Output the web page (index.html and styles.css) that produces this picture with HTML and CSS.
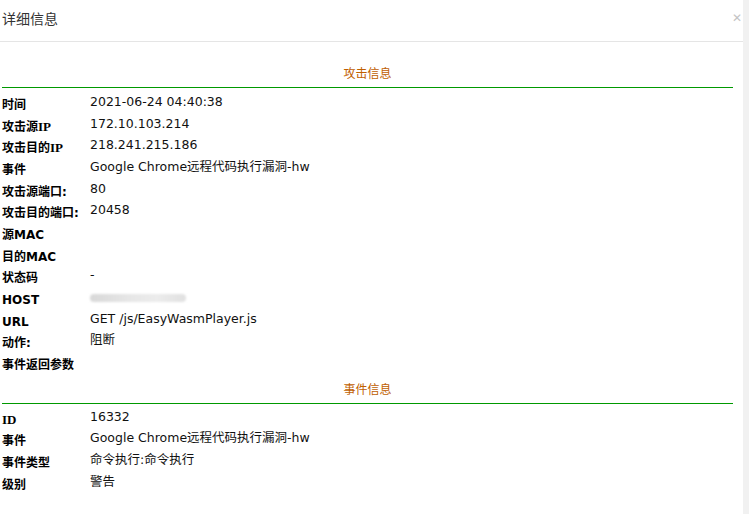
FILE: index.html
```html
<!DOCTYPE html>
<html>
<head>
<meta charset="utf-8">
<link rel="stylesheet" href="styles.css">
</head>
<body>
<div class="page">
  <div class="dialog">
    <div class="header">
      <span class="title">详细信息</span>
      <span class="close">✕</span>
    </div>
    <div class="content">
      <div class="section-title">攻击信息</div>
      <div class="rows">
        <div class="row"><div class="label">时间</div><div class="value">2021-06-24 04:40:38</div></div>
        <div class="row"><div class="label">攻击源<span class="serif">IP</span></div><div class="value">172.10.103.214</div></div>
        <div class="row"><div class="label">攻击目的<span class="serif">IP</span></div><div class="value">218.241.215.186</div></div>
        <div class="row"><div class="label">事件</div><div class="value">Google Chrome远程代码执行漏洞-hw</div></div>
        <div class="row"><div class="label">攻击源端口:</div><div class="value">80</div></div>
        <div class="row"><div class="label">攻击目的端口:</div><div class="value">20458</div></div>
        <div class="row"><div class="label">源MAC</div><div class="value"></div></div>
        <div class="row"><div class="label">目的MAC</div><div class="value"></div></div>
        <div class="row"><div class="label">状态码</div><div class="value">-</div></div>
        <div class="row"><div class="label">HOST</div><div class="value"><span class="blur"></span></div></div>
        <div class="row"><div class="label">URL</div><div class="value">GET /js/EasyWasmPlayer.js</div></div>
        <div class="row"><div class="label">动作:</div><div class="value">阻断</div></div>
        <div class="row"><div class="label">事件返回参数</div><div class="value"></div></div>
      </div>
      <div class="section-title second">事件信息</div>
      <div class="rows">
        <div class="row"><div class="label serif">ID</div><div class="value">16332</div></div>
        <div class="row"><div class="label">事件</div><div class="value">Google Chrome远程代码执行漏洞-hw</div></div>
        <div class="row"><div class="label">事件类型</div><div class="value">命令执行:命令执行</div></div>
        <div class="row"><div class="label">级别</div><div class="value">警告</div></div>
      </div>
    </div>
  </div>
  <div class="scrollbar"></div>
</div>
</body>
</html>
```

FILE: styles.css
```css
html, body {
  margin: 0;
  padding: 0;
  background: #fff;
}
body {
  font-family: "DejaVu Sans", "Noto Sans CJK SC", sans-serif;
  font-size: 12px;
  color: #000;
}
.page {
  display: flex;
  width: 749px;
  height: 514px;
  overflow: hidden;
}
.dialog {
  width: 743px;
  flex: none;
  overflow: hidden;
}
.scrollbar {
  flex: 1;
  background: #f1f1f1;
}
.header {
  height: 42px;
  border-bottom: 1px solid #e5e5e5;
  display: flex;
  align-items: center;
  justify-content: space-between;
  box-sizing: border-box;
  padding-left: 2px;
}
.title {
  font-family: "Noto Sans CJK SC", sans-serif;
  font-size: 14px;
  color: #333;
  margin-top: -6px;
}
.close {
  color: #c4c4c4;
  font-size: 12px;
  font-weight: bold;
  margin-right: 1px;
  margin-top: -6px;
}
.content {
  padding: 0 10px 0 2px;
}
.section-title {
  font-family: "Noto Sans CJK SC", sans-serif;
  font-size: 12px;
  color: #c06000;
  text-align: center;
  height: 46px;
  line-height: 20px;
  padding-top: 21px;
  box-sizing: border-box;
  border-bottom: 1px solid #009900;
  margin-bottom: 6px;
}
.section-title.second {
  height: 28px;
  padding-top: 3px;
  margin-bottom: 5px;
}
.row {
  display: flex;
  height: 21.67px;
}
.label {
  width: 88px;
  flex: none;
  font-weight: bold;
  font-family: "DejaVu Sans", "Noto Sans CJK SC", sans-serif;
  font-size: 12px;
  padding-top: 3px;
  line-height: 16px;
}
.serif {
  font-family: "Liberation Serif", "Noto Sans CJK SC", serif;
  font-size: 13px;
}
.value {
  font-size: 12.5px;
  line-height: 16px;
  color: #111;
}
.blur {
  display: inline-block;
  width: 96px;
  height: 8px;
  margin-top: 5px;
  border-radius: 4px;
  background: linear-gradient(90deg, #d8d8d8, #e6e6e6 40%, #ececec 70%, #e0e0e0);
  filter: blur(1px);
}
```
